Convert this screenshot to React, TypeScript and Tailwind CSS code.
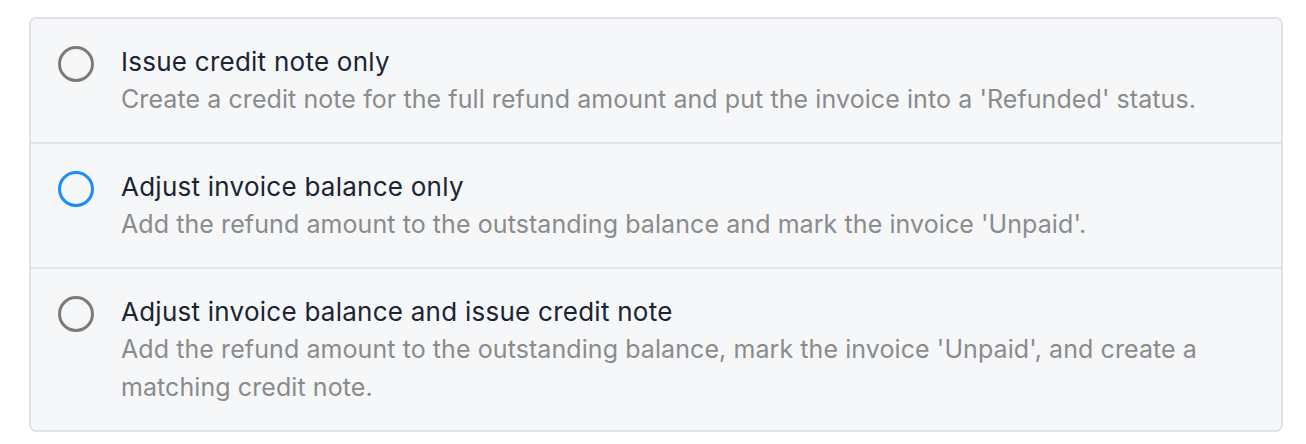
import { useState } from 'react';

const options = [
  {
    id: 'credit',
    title: 'Issue credit note only',
    description: "Create a credit note for the full refund amount and put the invoice into a 'Refunded' status.",
  },
  {
    id: 'adjust',
    title: 'Adjust invoice balance only',
    description: "Add the refund amount to the outstanding balance and mark the invoice 'Unpaid'.",
  },
  {
    id: 'both',
    title: 'Adjust invoice balance and issue credit note',
    description:
      "Add the refund amount to the outstanding balance, mark the invoice 'Unpaid', and create a matching credit note.",
  },
];

export default function App() {
  const [selected, setSelected] = useState('adjust');

  return (
    <div className="w-[1306px] h-[444px] bg-white pt-[17px] pl-[29px] font-['Inter','Noto_Sans',sans-serif]">
      <div className="w-[1254px] rounded-[7px] border-2 border-[#e1e2e5] bg-[#f6f7f9] overflow-hidden">
        {options.map((opt, i) => (
          <label
            key={opt.id}
            onClick={() => setSelected(opt.id)}
            className={`flex gap-[27px] pl-[27px] pr-[60px] pt-[25px] pb-[24px] cursor-pointer ${
              i > 0 ? 'border-t-2 border-[#e1e2e5]' : ''
            }`}
          >
            <span
              className={`mt-[2px] w-[36px] h-[36px] shrink-0 rounded-full border-[3px] ${
                selected === opt.id ? 'border-[#1a8cff]' : 'border-[#7b7b7b]'
              }`}
            />
            <div>
              <div className="text-[26px] leading-[36px] tracking-[0.25px] text-[#1b2433]">{opt.title}</div>
              <div className="text-[25px] leading-[38px] tracking-[0.08px] text-[#8b8b8b]">{opt.description}</div>
            </div>
          </label>
        ))}
      </div>
    </div>
  );
}
